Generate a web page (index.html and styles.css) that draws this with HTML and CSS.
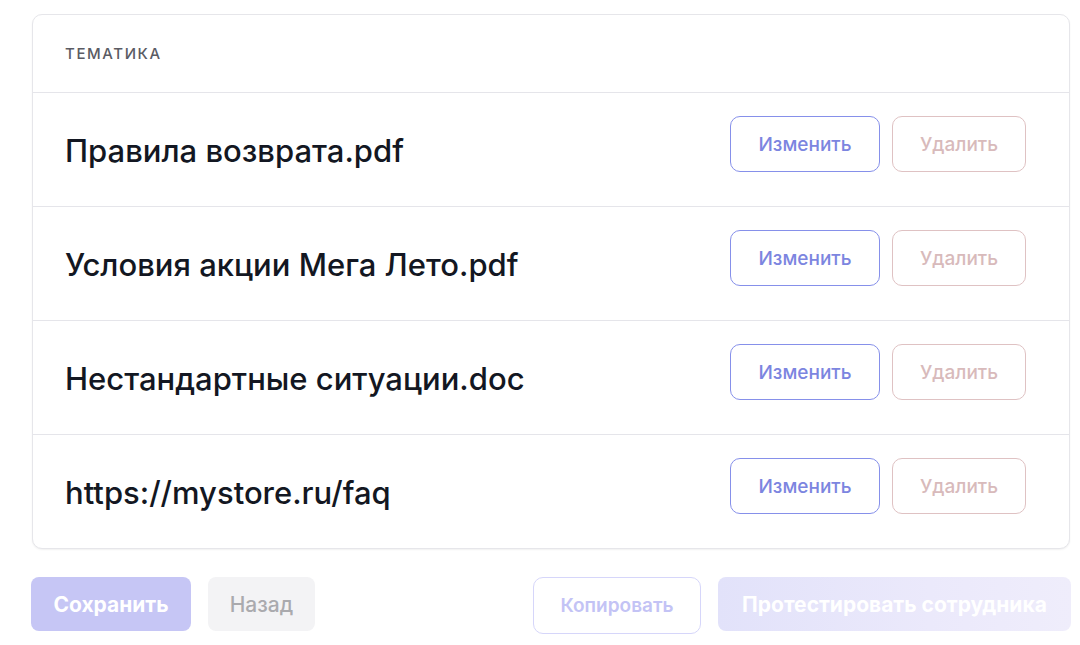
FILE: index.html
```html
<!DOCTYPE html>
<html lang="ru">
<head>
<meta charset="utf-8">
<link rel="stylesheet" href="styles.css">
</head>
<body>
<div class="page">
  <section class="card">
    <div class="card-head">ТЕМАТИКА</div>
    <div class="row">
      <div class="name">Правила возврата.pdf</div>
      <div class="actions"><button class="btn-edit">Изменить</button><button class="btn-del">Удалить</button></div>
    </div>
    <div class="row">
      <div class="name">Условия акции Мега Лето.pdf</div>
      <div class="actions"><button class="btn-edit">Изменить</button><button class="btn-del">Удалить</button></div>
    </div>
    <div class="row">
      <div class="name">Нестандартные ситуации.doc</div>
      <div class="actions"><button class="btn-edit">Изменить</button><button class="btn-del">Удалить</button></div>
    </div>
    <div class="row">
      <div class="name">https://mystore.ru/faq</div>
      <div class="actions"><button class="btn-edit">Изменить</button><button class="btn-del">Удалить</button></div>
    </div>
  </section>
  <div class="footer">
    <div class="group">
      <button class="btn-save">Сохранить</button>
      <button class="btn-back">Назад</button>
    </div>
    <div class="group">
      <button class="btn-copy">Копировать</button>
      <button class="btn-test">Протестировать сотрудника</button>
    </div>
  </div>
</div>
</body>
</html>
```

FILE: styles.css
```css
* { box-sizing: border-box; }
html, body { margin: 0; padding: 0; background: #ffffff; }
body {
  font-family: Inter, "Noto Sans", "Liberation Sans", sans-serif;
  width: 1080px;
  height: 645px;
  overflow: hidden;
}
.page {
  padding: 14px 9px 0 31px;
}
.card {
  margin-left: 1px;
  width: 1038px;
  border: 1px solid #e6e6ea;
  border-radius: 10px;
  background: #fff;
  box-shadow: 0 1px 2px rgba(0,0,0,0.06);
}
.card-head {
  height: 78px;
  padding: 29px 0 0 32px;
  font-size: 15px;
  font-weight: 500;
  letter-spacing: 1.6px;
  color: #5a5b63;
  border-bottom: 1px solid #e5e5ea;
}
.row {
  height: 114px;
  display: flex;
  align-items: center;
  justify-content: space-between;
  padding: 0 43px 0 32px;
  border-bottom: 1px solid #e5e5ea;
}
.row:last-child { border-bottom: none; height: 113px; }
.name {
  font-size: 31px;
  font-weight: 500;
  color: #131722;
  margin-top: 1px;
}
.actions { display: flex; gap: 12px; margin-bottom: 11px; }
button {
  font-family: inherit;
  cursor: pointer;
  background: #fff;
}
.btn-edit, .btn-del {
  height: 56px;
  border-radius: 10px;
  font-size: 19px;
  font-weight: 500;
}
.btn-edit {
  width: 150px;
  border: 1.5px solid #8690ea;
  color: #7c85e0;
}
.btn-del {
  width: 134px;
  border: 1.5px solid #dfc2c3;
  color: #d8babb;
}
.footer {
  margin-top: 28px;
  display: flex;
  justify-content: space-between;
  width: 1040px;
}
.group { display: flex; gap: 17px; }
.btn-save, .btn-back, .btn-test {
  height: 54px;
  border: none;
  border-radius: 8px;
  font-size: 21px;
}
.btn-save {
  width: 160px;
  background: #c6c6f5;
  color: #fff;
  font-weight: 700;
}
.btn-back {
  width: 107px;
  background: #f3f3f5;
  color: #aaaaae;
  font-weight: 500;
}
.btn-copy {
  width: 168px;
  height: 57px;
  border: 1.5px solid #d6d6fa;
  border-radius: 10px;
  color: #c3c3f5;
  font-size: 19px;
  font-weight: 600;
}
.btn-test {
  width: 353px;
  background: linear-gradient(90deg, #e2e2fa 0%, #ebe9fb 60%, #efedfb 100%);
  color: #fff;
  font-weight: 700;
}
```
